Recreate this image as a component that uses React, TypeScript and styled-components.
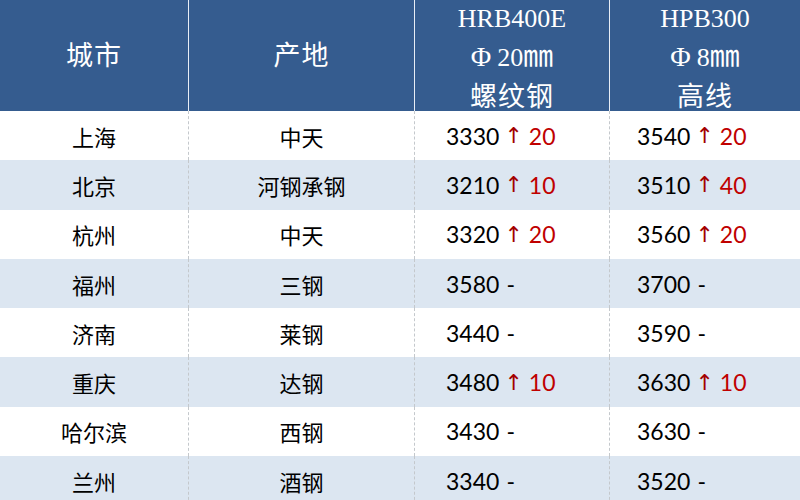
import React, { FC } from "react";
import styled, { createGlobalStyle } from "styled-components";

const GlobalStyle = createGlobalStyle`
    html, body {
        margin: 0;
        padding: 0;
        background: #ffffff;
    }
`

const COLS = "189px 226px 195px 190px";

const Table = styled.div`
    width: 800px;
    height: 500px;
    overflow: hidden;
    display: flex;
    flex-direction: column;
`

const HeadRow = styled.div`
    display: grid;
    grid-template-columns: ${COLS};
    height: 111px;
    background: #355c8f;
    flex-shrink: 0;
`

const HeadCell = styled.div<{ $last?: boolean; $lift?: number }>`
    display: flex;
    flex-direction: column;
    align-items: center;
    justify-content: center;
    padding-bottom: ${p => p.$lift ?? 0}px;
    color: #ffffff;
    font-family: "Liberation Serif", "Noto Sans CJK SC", serif;
    font-size: 26px;
    line-height: 37px;
    border-right: ${p => (p.$last ? "none" : "1.5px solid #e8eef6")};
`

const HeadLine = styled.span``

const HeadCn = styled.span`
    font-family: "Noto Sans CJK SC", sans-serif;
    font-size: 27px;
    letter-spacing: 1px;
`

const Phi = styled.span`
    margin-right: 6px;
    font-size: 28px;
`

const Mm = styled.span`
    font-size: 30px;
`

const Row = styled.div<{ $alt: boolean }>`
    display: grid;
    grid-template-columns: ${COLS};
    height: 49.3px;
    flex-shrink: 0;
    background: ${p => (p.$alt ? "#dce6f1" : "#ffffff")};
`

const Cell = styled.div<{ $align: "center" | "left"; $pad?: number; $last?: boolean }>`
    display: flex;
    align-items: center;
    justify-content: ${p => (p.$align === "center" ? "center" : "flex-start")};
    padding-left: ${p => p.$pad ?? 0}px;
    font-family: Lato, "Noto Sans CJK SC", sans-serif;
    font-size: 23px;
    color: #000000;
    border-right: ${p => (p.$last ? "none" : "1px dashed #c4c8cc")};
`

const CnText = styled.span`
    font-family: "Noto Sans CJK SC", sans-serif;
    font-size: 22px;
`

const Arrow = styled.span`
    color: #a30000;
    font-family: "DejaVu Sans", sans-serif;
    font-size: 22px;
    margin: 0 6px 0 5px;
`

const Up = styled.span`
    color: #c00000;
`

const Flat = styled.span`
    margin-left: 7px;
`

type Price = { v: number; d?: number };
type Item = { city: string; origin: string; a: Price; b: Price };

const rows: Item[] = [
    { city: "上海", origin: "中天", a: { v: 3330, d: 20 }, b: { v: 3540, d: 20 } },
    { city: "北京", origin: "河钢承钢", a: { v: 3210, d: 10 }, b: { v: 3510, d: 40 } },
    { city: "杭州", origin: "中天", a: { v: 3320, d: 20 }, b: { v: 3560, d: 20 } },
    { city: "福州", origin: "三钢", a: { v: 3580 }, b: { v: 3700 } },
    { city: "济南", origin: "莱钢", a: { v: 3440 }, b: { v: 3590 } },
    { city: "重庆", origin: "达钢", a: { v: 3480, d: 10 }, b: { v: 3630, d: 10 } },
    { city: "哈尔滨", origin: "西钢", a: { v: 3430 }, b: { v: 3630 } },
    { city: "兰州", origin: "酒钢", a: { v: 3340 }, b: { v: 3520 } },
];

const PriceView: FC<{ p: Price }> = ({ p }) => (
    <>
        <span>{p.v}</span>
        {p.d ? (
            <>
                <Arrow>↑</Arrow>
                <Up>{p.d}</Up>
            </>
        ) : (
            <Flat>-</Flat>
        )}
    </>
)

const App: FC = () => {
    return (
        <>
            <GlobalStyle />
            <Table>
                <HeadRow>
                    <HeadCell $lift={7}><HeadCn>城市</HeadCn></HeadCell>
                    <HeadCell $lift={7}><HeadCn>产地</HeadCn></HeadCell>
                    <HeadCell>
                        <HeadLine>HRB400E</HeadLine>
                        <HeadLine><Phi>Φ</Phi>20<Mm>㎜</Mm></HeadLine>
                        <HeadCn>螺纹钢</HeadCn>
                    </HeadCell>
                    <HeadCell $last>
                        <HeadLine>HPB300</HeadLine>
                        <HeadLine><Phi>Φ</Phi>8<Mm>㎜</Mm></HeadLine>
                        <HeadCn>高线</HeadCn>
                    </HeadCell>
                </HeadRow>
                {rows.map((r, i) => (
                    <Row key={r.city} $alt={i % 2 === 1}>
                        <Cell $align="center"><CnText>{r.city}</CnText></Cell>
                        <Cell $align="center"><CnText>{r.origin}</CnText></Cell>
                        <Cell $align="left" $pad={31}><PriceView p={r.a} /></Cell>
                        <Cell $align="left" $pad={27} $last><PriceView p={r.b} /></Cell>
                    </Row>
                ))}
            </Table>
        </>
    )
}

export default App
